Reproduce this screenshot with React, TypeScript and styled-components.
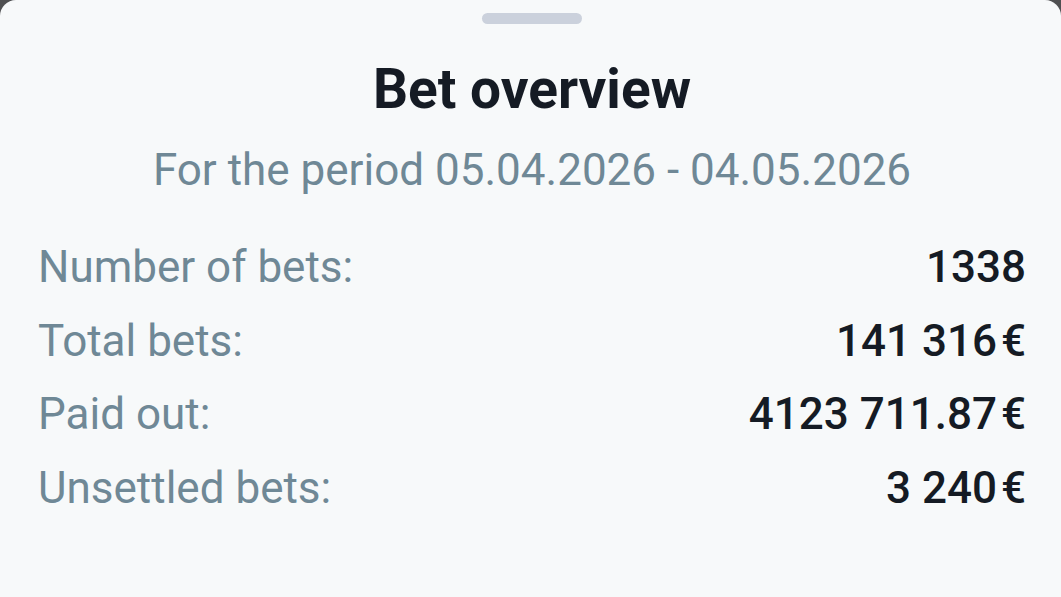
import React from "react";
import styled, { createGlobalStyle } from "styled-components";

const Global = createGlobalStyle`
  html, body {
    margin: 0;
    padding: 0;
    background: #4f5052;
  }
  body {
    font-family: Roboto, "Noto Sans", Arial, sans-serif;
    -webkit-font-smoothing: antialiased;
  }
`;

const Sheet = styled.div`
  width: 1061px;
  height: 597px;
  box-sizing: border-box;
  background: #f7f9fa;
  border-radius: 16px 16px 0 0;
  display: flex;
  flex-direction: column;
  align-items: center;
  padding: 13px 35px 0 38px;
`;

const Handle = styled.div`
  width: 100px;
  height: 11px;
  border-radius: 6px;
  background: #cbd1dc;
  flex: none;
`;

const Title = styled.h1`
  margin: 35px 0 0;
  font-size: 55px;
  line-height: 60px;
  font-weight: 700;
  color: #151b24;
  letter-spacing: 0;
`;

const Period = styled.p`
  margin: 25px 0 0;
  font-size: 44px;
  line-height: 52px;
  font-weight: 400;
  color: #6f8896;
`;

const Stats = styled.dl`
  align-self: stretch;
  margin: 45px 0 0;
  display: flex;
  flex-direction: column;
  gap: 21.5px;
`;

const Row = styled.div`
  display: flex;
  justify-content: space-between;
  align-items: baseline;
  font-size: 44px;
  line-height: 52px;
`;

const Label = styled.dt`
  margin: 0;
  color: #6f8896;
  font-weight: 400;
`;

const Value = styled.dd`
  margin: 0;
  color: #151b24;
  font-weight: 500;
`;

const Euro = styled.span`
  margin-left: 4px;
`;

const stats: { label: string; value: string; currency?: boolean }[] = [
  { label: "Number of bets:", value: "1338" },
  { label: "Total bets:", value: "141 316", currency: true },
  { label: "Paid out:", value: "4123 711.87", currency: true },
  { label: "Unsettled bets:", value: "3 240", currency: true },
];

export default function App() {
  return (
    <>
      <Global />
      <Sheet>
        <Handle />
        <Title>Bet overview</Title>
        <Period>For the period 05.04.2026 - 04.05.2026</Period>
        <Stats>
          {stats.map((s) => (
            <Row key={s.label}>
              <Label>{s.label}</Label>
              <Value>
                {s.value}
                {s.currency && <Euro>€</Euro>}
              </Value>
            </Row>
          ))}
        </Stats>
      </Sheet>
    </>
  );
}
